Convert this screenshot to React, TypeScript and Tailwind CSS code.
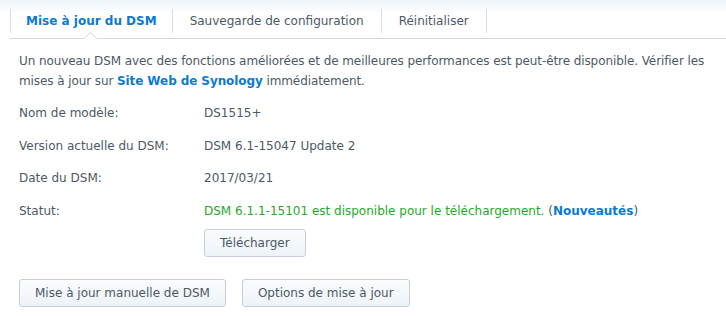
import React from "react";

const font = { fontFamily: '"DejaVu Sans", Verdana, sans-serif' };

function Btn({ children }: { children: React.ReactNode }) {
  return (
    <button className="h-[28px] px-[15px] rounded-[3px] border border-[#c6cfd9] bg-gradient-to-b from-[#fafcfe] to-[#eef3f8] text-[12px] text-[#4c5966] leading-none">
      {children}
    </button>
  );
}

export default function App() {
  const rows: [string, React.ReactNode][] = [
    ["Nom de modèle:", "DS1515+"],
    ["Version actuelle du DSM:", "DSM 6.1-15047 Update 2"],
    ["Date du DSM:", "2017/03/21"],
    [
      "Statut:",
      <span className="text-[#27a82b]">
        DSM 6.1.1-15101 est disponible pour le téléchargement.{" "}
        <span className="text-[#4c5966]">(</span>
        <span className="font-bold text-[#0a7ad6]">Nouveautés</span>
        <span className="text-[#4c5966]">)</span>
      </span>,
    ],
  ];
  return (
    <div className="w-[726px] h-[317px] bg-white overflow-hidden text-[12px] text-[#4c5966]" style={font}>
      <div className="relative h-[39px] bg-gradient-to-b from-[#eef4fa] to-white to-[35%] pl-[10px]">
        <div className="flex pt-[9px]">
          <div className="h-[24px] flex items-center px-[15px] border-l border-r border-[#d5dde5] font-bold text-[#0a7ad6]">
            Mise à jour du DSM
          </div>
          <div className="h-[24px] flex items-center px-[17px] border-r border-[#d5dde5]">
            Sauvegarde de configuration
          </div>
          <div className="h-[24px] flex items-center px-[17px] border-r border-[#d5dde5]">
            Réinitialiser
          </div>
        </div>
        <div className="absolute left-[10px] right-0 bottom-0 h-px bg-[#d3d9df]" />
        <svg className="absolute left-[84px] bottom-0" width="13" height="7" viewBox="0 0 13 7">
          <path d="M0 6.5 L6.5 0.5 L13 6.5" fill="white" stroke="#d3d9df" strokeWidth="1" />
          <rect x="0.5" y="6" width="12" height="1" fill="white" />
        </svg>
      </div>
      <div className="pl-[19px] pr-[6px] pt-[12px]">
        <p className="leading-[20px] tracking-[-0.09px]">
          Un nouveau DSM avec des fonctions améliorées et de meilleures performances est peut-être disponible. Vérifier les mises à jour sur{" "}
          <span className="font-bold text-[#0a7ad6]">Site Web de Synology</span> immédiatement.
        </p>
        <div className="mt-[6px]">
          {rows.map(([k, v], i) => (
            <div key={i} className="flex h-[32.5px] items-center">
              <div className="w-[185px] shrink-0">{k}</div>
              <div>{v}</div>
            </div>
          ))}
        </div>
        <div className="pl-[185px] mt-[2px]">
          <Btn>Télécharger</Btn>
        </div>
        <div className="flex gap-4 mt-[22px]">
          <Btn>Mise à jour manuelle de DSM</Btn>
          <Btn>Options de mise à jour</Btn>
        </div>
      </div>
    </div>
  );
}
